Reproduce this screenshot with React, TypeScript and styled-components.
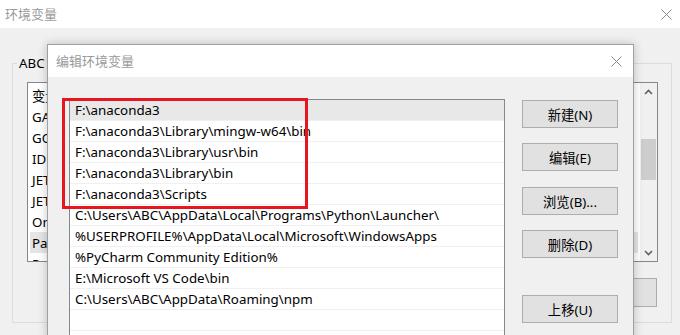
import React from "react";
import styled, { createGlobalStyle } from "styled-components";

const Global = createGlobalStyle`
  html, body { margin: 0; padding: 0; background: #f0f0f0; }
  body {
    font-family: "Noto Sans", "Noto Sans CJK SC", sans-serif;
    font-size: 13px;
    color: #000;
  }
  * { box-sizing: border-box; }
`;

const Screen = styled.div`
  position: relative;
  width: 680px;
  height: 335px;
  overflow: hidden;
  display: flex;
  flex-direction: column;
  background: #f0f0f0;
`;

const TitleBar = styled.div<{ $h: number; $pl: number; $pr: number }>`
  flex: none;
  height: ${(p) => p.$h}px;
  display: flex;
  align-items: center;
  justify-content: space-between;
  padding: 0 ${(p) => p.$pr}px 0 ${(p) => p.$pl}px;
  background: #fff;
`;

const TitleText = styled.span`
  font-size: 13px;
  line-height: 1;
  color: #9a9a9a;
`;

const CloseIcon = () => (
  <svg width="11" height="11" viewBox="0 0 11 11">
    <path d="M0.5 0.5 L10.5 10.5 M10.5 0.5 L0.5 10.5" stroke="#8c8c8c" strokeWidth="1" fill="none" />
  </svg>
);

const OuterBody = styled.div`
  flex: 1;
  padding: 26px 8px 0 12px;
`;

const GroupBox = styled.fieldset`
  margin: 0;
  width: 660px;
  min-width: 0;
  padding: 10px 13px 15px 14px;
  border: 1px solid #dcdcdc;
`;

const Legend = styled.legend`
  padding: 0 2px;
  margin-left: -10px;
  font-size: 13.3px;
  line-height: 18px;
`;

const VarList = styled.div`
  height: 180px;
  display: flex;
  border: 1px solid #828790;
  background: #fff;
`;

const VarRows = styled.div`
  flex: 1;
  display: flex;
  flex-direction: column;
  padding-top: 2px;
  overflow: hidden;
`;

const VarRow = styled.div<{ $selected?: boolean }>`
  flex: none;
  height: 21px;
  margin: 0 2px;
  padding-left: 2px;
  display: grid;
  grid-template-columns: 180px 1fr;
  align-items: center;
  white-space: nowrap;
  overflow: hidden;
  font-size: 13.3px;
  background: ${(p) => (p.$selected ? "#e5e5e5" : "transparent")};
`;

const ScrollBar = styled.div`
  flex: none;
  width: 17px;
  display: flex;
  flex-direction: column;
  background: #f0f0f0;
`;

const ScrollArrow = styled.div`
  flex: none;
  height: 17px;
  display: flex;
  align-items: center;
  justify-content: center;
`;

const ScrollTrack = styled.div`
  flex: 1;
  display: flex;
  flex-direction: column;
`;

const Thumb = styled.div<{ $offset: number; $size: number }>`
  margin: ${(p) => p.$offset}px 1px 0 1px;
  height: ${(p) => p.$size}px;
  background: #cdcdcd;
`;

const Chevron = ({ up }: { up?: boolean }) => (
  <svg width="9" height="6" viewBox="0 0 9 6">
    <path
      d={up ? "M1 5 L4.5 1.5 L8 5" : "M1 1 L4.5 4.5 L8 1"}
      stroke="#606060"
      strokeWidth="1.6"
      fill="none"
    />
  </svg>
);

const ButtonRow = styled.div`
  display: flex;
  justify-content: flex-end;
  gap: 10px;
  margin-top: 16px;
  padding-right: 1px;
`;

const WinButton = styled.div<{ $w: number; $h: number; $mt?: number }>`
  flex: none;
  width: ${(p) => p.$w}px;
  height: ${(p) => p.$h}px;
  margin-top: ${(p) => p.$mt ?? 0}px;
  display: flex;
  align-items: center;
  justify-content: center;
  border: 1px solid #adadad;
  background: #e1e1e1;
  font-size: 13.3px;
  color: #000;
`;

const Dialog = styled.section`
  position: absolute;
  left: 47px;
  top: 44px;
  width: 587px;
  height: 320px;
  display: flex;
  flex-direction: column;
  border: 1px solid #a0a0a0;
  background: #f0f0f0;
  box-shadow: 0 0 9px rgba(0, 0, 0, 0.22);
`;

const DialogBody = styled.div`
  flex: 1;
  display: flex;
  align-items: flex-start;
  gap: 17px;
  padding: 22px 15px 0 21px;
`;

const PathList = styled.div`
  position: relative;
  flex: none;
  width: 436px;
  height: 280px;
  border: 1px solid #828790;
  background: #fff;
`;

const PathRow = styled.div<{ $selected?: boolean }>`
  height: 21px;
  padding-left: 5px;
  display: flex;
  align-items: center;
  white-space: nowrap;
  font-size: 13.35px;
  border-bottom: 1px solid #f0f0f0;
  background: ${(p) => (p.$selected ? "#e8e8e8" : "#fff")};
`;

const Annotation = styled.div`
  position: absolute;
  left: -8px;
  top: -2px;
  width: 246px;
  height: 111px;
  border: 3px solid #e8141e;
  pointer-events: none;
`;

const ButtonColumn = styled.div`
  flex: none;
  width: 96px;
  display: flex;
  flex-direction: column;
  padding-top: 1px;
`;

const vars = [
  "GAMS_HOME",
  "GOPATH",
  "IDEA",
  "JETBRAINS_CLIENT",
  "JETBRAINS_GATEWAY",
  "OneDrive",
  "Path",
  "PyCharm",
];

const paths = [
  "F:\\anaconda3",
  "F:\\anaconda3\\Library\\mingw-w64\\bin",
  "F:\\anaconda3\\Library\\usr\\bin",
  "F:\\anaconda3\\Library\\bin",
  "F:\\anaconda3\\Scripts",
  "C:\\Users\\ABC\\AppData\\Local\\Programs\\Python\\Launcher\\",
  "%USERPROFILE%\\AppData\\Local\\Microsoft\\WindowsApps",
  "%PyCharm Community Edition%",
  "E:\\Microsoft VS Code\\bin",
  "C:\\Users\\ABC\\AppData\\Roaming\\npm",
  "",
  "",
];

const dialogButtons = [
  { label: "新建(N)", mt: 0 },
  { label: "编辑(E)", mt: 15 },
  { label: "浏览(B)...", mt: 16 },
  { label: "删除(D)", mt: 15 },
  { label: "上移(U)", mt: 37 },
];

export default function App() {
  return (
    <>
      <Global />
      <Screen>
        <TitleBar $h={28} $pl={5} $pr={8}>
          <TitleText>环境变量</TitleText>
          <CloseIcon />
        </TitleBar>
        <OuterBody>
          <GroupBox>
            <Legend>ABC 的用户变量(U)</Legend>
            <VarList>
              <VarRows>
                <VarRow>
                  <span>变量</span>
                  <span>值</span>
                </VarRow>
                {vars.map((v) => (
                  <VarRow key={v} $selected={v === "Path"}>
                    <span>{v}</span>
                    <span></span>
                  </VarRow>
                ))}
              </VarRows>
              <ScrollBar>
                <ScrollArrow>
                  <Chevron up />
                </ScrollArrow>
                <ScrollTrack>
                  <Thumb $offset={39} $size={41} />
                </ScrollTrack>
                <ScrollArrow>
                  <Chevron />
                </ScrollArrow>
              </ScrollBar>
            </VarList>
            <ButtonRow>
              <WinButton $w={90} $h={29}>新建(N)...</WinButton>
              <WinButton $w={90} $h={29}>编辑(E)...</WinButton>
              <WinButton $w={96} $h={29}>删除(D)</WinButton>
            </ButtonRow>
          </GroupBox>
        </OuterBody>

        <Dialog>
          <TitleBar $h={32} $pl={8} $pr={11}>
            <TitleText>编辑环境变量</TitleText>
            <CloseIcon />
          </TitleBar>
          <DialogBody>
            <PathList>
              {paths.map((p, i) => (
                <PathRow key={i} $selected={i === 0}>
                  {p}
                </PathRow>
              ))}
              <Annotation />
            </PathList>
            <ButtonColumn>
              {dialogButtons.map((b) => (
                <WinButton key={b.label} $w={96} $h={28} $mt={b.mt}>
                  {b.label}
                </WinButton>
              ))}
            </ButtonColumn>
          </DialogBody>
        </Dialog>
      </Screen>
    </>
  );
}
